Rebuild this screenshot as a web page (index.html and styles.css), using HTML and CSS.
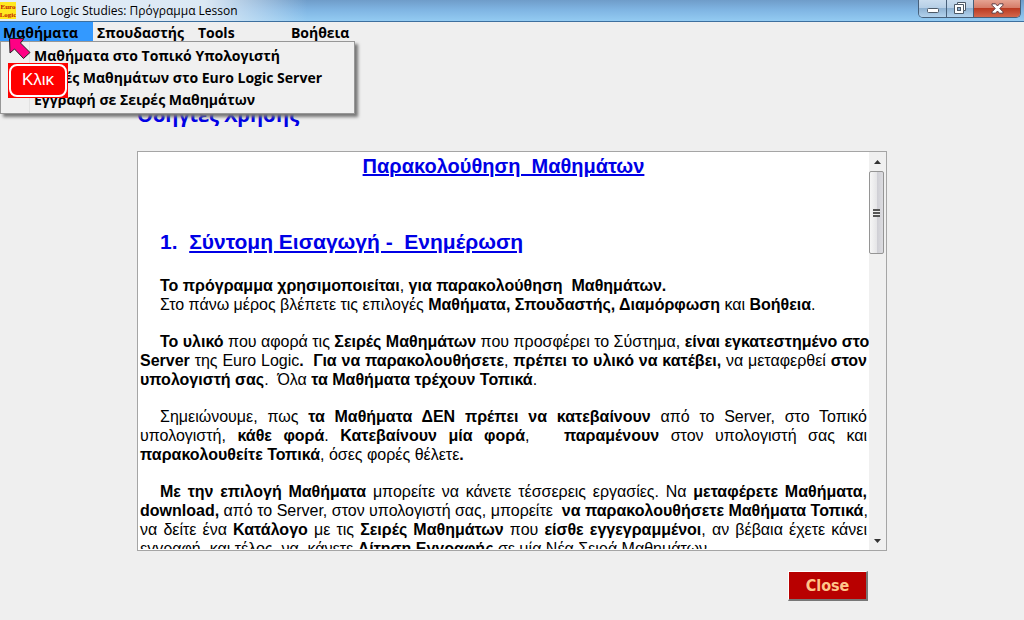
FILE: index.html
```html
<!DOCTYPE html>
<html lang="el">
<head>
<meta charset="utf-8">
<title>Euro Logic Studies: Πρόγραμμα Lesson</title>
<link rel="stylesheet" href="styles.css">
</head>
<body>
<header class="titlebar">
  <span class="app-icon"><span>Euro</span><span>Logic</span></span>
  <span class="title">Euro Logic Studies: Πρόγραμμα Lesson</span>
  <div class="window-controls">
    <button class="control minimize" aria-label="Minimize"><svg width="14" height="8" viewBox="0 0 14 8"><rect x="1.5" y="2.5" width="11" height="4" rx="1" fill="#fff" stroke="#4c5966"/></svg></button>
    <button class="control restore" aria-label="Restore"><svg width="14" height="13" viewBox="0 0 14 13"><path d="M4.500.500h8v8h-2v3h-9v-9h3z" fill="#fff" stroke="#4c5966"/><path d="M4.500 2.500h6v6" fill="none" stroke="#4c5966"/><rect x="4.500" y="5.500" width="3" height="3" fill="#8fb0d0" stroke="#4c5966"/></svg></button>
    <button class="control close-window" aria-label="Close window"><svg width="13" height="11" viewBox="0 0 13 11"><path d="M1 .8h3.600L6.500 3 8.400.800H12v1.400L8.800 5.500 12 8.800v1.400H8.400L6.500 8 4.600 10.200H1V8.800L4.200 5.500 1 2.200z" fill="#fff" stroke="#5e3a40"/></svg></button>
  </div>
</header>

<nav class="menubar">
  <div class="menu-entry">
    <button class="menu-button active">Μαθήματα</button>
    <div class="dropdown">
      <button class="dropdown-item">Μαθήματα στο Τοπικό Υπολογιστή</button>
      <button class="dropdown-item">Σειρές Μαθημάτων στο Euro Logic Server</button>
      <button class="dropdown-item">Εγγραφή σε Σειρές Μαθημάτων</button>
    </div>
    <svg class="pointer" width="26" height="26" viewBox="0 0 26 26"><path d="M1.500 1.500H16L12.500 6 22 15.500 15.500 21.500 6.500 12 2 16z" fill="#ff0084" stroke="#222"/></svg>
    <div class="click-hint"><span>Κλικ</span></div>
  </div>
  <button class="menu-button">Σπουδαστής</button>
  <button class="menu-button tools">Tools</button>
  <button class="menu-button">Βοήθεια</button>
</nav>

<main class="content">
  <h1 class="heading">Οδηγίες Χρήσης</h1>
  <section class="viewer">
    <article class="document">
      <h2 class="doc-title">Παρακολούθηση&nbsp; Μαθημάτων</h2>
      <h3 class="doc-section">1.&nbsp; <u>Σύντομη Εισαγωγή -&nbsp; Ενημέρωση</u></h3>
      <p class="para"><span class="line"><b>Το πρόγραμμα χρησιμοποιείται</b>, <b>για παρακολούθηση&nbsp; Μαθημάτων.</b></span></p>
      <p class="para follow"><span class="line">Στο πάνω μέρος βλέπετε τις επιλογές <b>Μαθήματα, Σπουδαστής, Διαμόρφωση</b> και <b>Βοήθεια</b>.</span></p>
      <p class="para">
        <span class="line"><b>Το υλικό</b> που αφορά τις <b>Σειρές Μαθημάτων</b> που προσφέρει το Σύστημα, <b>είναι εγκατεστημένο στο</b></span>
        <span class="line"><b>Server</b> της Euro Logic<b>.&nbsp; Για να παρακολουθήσετε</b>, <b>πρέπει το υλικό να κατέβει,</b> να μεταφερθεί <b>στον</b></span>
        <span class="line"><b>υπολογιστή σας</b>.&nbsp; Όλα <b>τα Μαθήματα τρέχουν Τοπικά</b>.</span>
      </p>
      <p class="para">
        <span class="line">Σημειώνουμε, πως <b>τα Μαθήματα ΔΕΝ πρέπει να κατεβαίνουν</b> από το Server, στο Τοπικό</span>
        <span class="line">υπολογιστή, <b>κάθε φορά</b>. <b>Κατεβαίνουν μία φορά</b>,&nbsp;&nbsp; <b>παραμένουν</b> στον υπολογιστή σας και</span>
        <span class="line"><b>παρακολουθείτε Τοπικά</b>, όσες φορές θέλετε<b>.</b></span>
      </p>
      <p class="para">
        <span class="line"><b>Με την επιλογή Μαθήματα</b> μπορείτε να κάνετε τέσσερεις εργασίες. Να <b>μεταφέρετε Μαθήματα,</b></span>
        <span class="line"><b>download,</b> από το Server, στον υπολογιστή σας, μπορείτε&nbsp; <b>να παρακολουθήσετε Μαθήματα Τοπικά</b>,</span>
        <span class="line">να δείτε ένα <b>Κατάλογο</b> με τις <b>Σειρές Μαθημάτων</b> που <b>είσθε εγγεγραμμένοι</b>, αν βέβαια έχετε κάνει</span>
        <span class="line">εγγραφή&nbsp; και τέλος&nbsp; να&nbsp; κάνετε <b>Αίτηση Εγγραφής</b> σε μία Νέα Σειρά Μαθημάτων.</span>
      </p>
    </article>
    <div class="scrollbar">
      <button class="scroll-arrow" aria-label="Scroll up"><svg width="7" height="4" viewBox="0 0 7 4"><path d="M0 4L3.500 0 7 4z" fill="#333"/></svg></button>
      <div class="thumb"><span class="grip"></span></div>
      <button class="scroll-arrow down" aria-label="Scroll down"><svg width="7" height="4" viewBox="0 0 7 4"><path d="M0 0h7L3.500 4z" fill="#333"/></svg></button>
    </div>
  </section>
  <div class="actions"><button class="close-button">Close</button></div>
</main>
</body>
</html>
```
FILE: styles.css
```css
* { box-sizing: border-box; }
body { margin: 0; background: #efefef; font-family: "Open Sans", "Noto Sans", sans-serif; color: #000; overflow: hidden; }
button { margin: 0; padding: 0; border: 0; background: none; font: inherit; color: inherit; }

.titlebar { display: flex; align-items: center; height: 22px; padding-right: 3px; border-bottom: 1px solid #3d6f9e; background: linear-gradient(90deg, #e3edf7 0, #dbe8f4 20%, rgba(180, 210, 236, 0) 30%), linear-gradient(#6f9cc9, #7fb4e2 45%, #93cbf2); }
.app-icon { display: flex; flex-direction: column; align-items: center; justify-content: center; width: 16px; height: 17px; background: #ffe820; color: #c01800; font: bold 7px/8px "Liberation Serif", serif; overflow: hidden; }
.title { flex: 1; padding-left: 5px; font-size: 12px; line-height: 20px; }
.window-controls { align-self: flex-start; display: flex; height: 18px; border: 1px solid #47607a; border-top: 0; border-radius: 0 0 5px 5px; overflow: hidden; }
.control { display: flex; align-items: center; justify-content: center; width: 27px; border-right: 1px solid #47607a; background: linear-gradient(#c9dcee, #b5cee5 48%, #8fb2d2 50%, #b3d2ec); }
.minimize { width: 28px; padding-top: 3px; }
.close-window { width: 46px; border-right: 0; background: linear-gradient(#e5a392, #d57b67 48%, #bb3b22 50%, #d4674b); }

.menubar { display: flex; height: 20px; font-size: 14px; font-weight: 700; line-height: 22px; }
.menu-entry { position: relative; }
.menu-button { display: block; height: 20px; padding: 0 4px; white-space: nowrap; }
.menu-button.active { width: 93px; padding: 0 3px; background: #3399ff; text-align: left; }
.menu-button.tools { width: 99px; padding-left: 10px; text-align: left; }
.dropdown { position: absolute; z-index: 1; left: 0; top: 19px; width: 355px; padding: 3px 0 2px; border: 1px solid #979797; background: linear-gradient(90deg, #f0f0f0 28px, #e2e2e2 28px, #e2e2e2 29px, #f0f0f0 29px); box-shadow: 3px 3px 3px #777; }
.dropdown-item { display: block; width: 100%; height: 22px; padding-left: 33px; line-height: 22px; text-align: left; white-space: nowrap; }
.pointer { position: absolute; z-index: 2; left: 8px; top: 15px; }
.click-hint { position: absolute; z-index: 2; left: 8px; top: 41px; width: 60px; height: 35px; padding: 1px; background: #f00; color: #fff; }
.click-hint span { display: block; height: 33px; border: 2px solid #fff; border-radius: 8px; font: 17px/28px "Liberation Sans", sans-serif; text-align: center; }

.content { width: 750px; max-width: 100%; margin: 0 auto; padding-top: 59px; }
.heading { margin: 0 0 22px; color: #0000e6; font-size: 20px; line-height: 28px; }
.viewer { display: flex; height: 400px; border: 1px solid #a5a5a5; background: #fff; }
.document { flex: 1; min-width: 0; height: 397px; padding: 2px 2px 0; overflow: hidden; font: 16px/19px "Liberation Sans", Arial, sans-serif; }
.doc-title { margin: 0; color: #0000e6; font-size: 20px; line-height: 24px; text-align: center; text-decoration: underline; }
.doc-section { margin: 52px 0 22px; padding-left: 20px; color: #0000e6; font-size: 21px; line-height: 24px; }
.para { margin: 18px 0 0; }
.para.follow, .doc-section + .para { margin-top: 0; }
.line { display: block; white-space: nowrap; text-align: justify; text-align-last: justify; }
.line:first-child { text-indent: 20px; }
.line:last-child { text-align-last: left; }
.scrollbar { display: flex; flex-direction: column; width: 17px; background: #f0f0f0; }
.scroll-arrow { display: flex; align-items: center; justify-content: center; height: 19px; }
.down { margin-top: auto; }
.thumb { display: flex; align-items: center; justify-content: center; width: 15px; height: 83px; border: 1px solid #959595; border-radius: 2px; background: linear-gradient(90deg, #f6f6f6, #e6e6e8 50%, #cfcfd5 55%, #dcdce0); }
.grip { width: 7px; height: 8px; background: repeating-linear-gradient(#555 0, #555 2px, #eee 2px, #eee 3px); }

.actions { display: flex; justify-content: flex-end; padding: 20px 19px 0; }
.close-button { width: 80px; height: 30px; border: 1px solid #fff; border-right: 2px solid #777; border-bottom: 2px solid #777; background: #b80000; color: #ffc58a; font: bold 16px/26px "DejaVu Sans Condensed", "DejaVu Sans", sans-serif; }
```
